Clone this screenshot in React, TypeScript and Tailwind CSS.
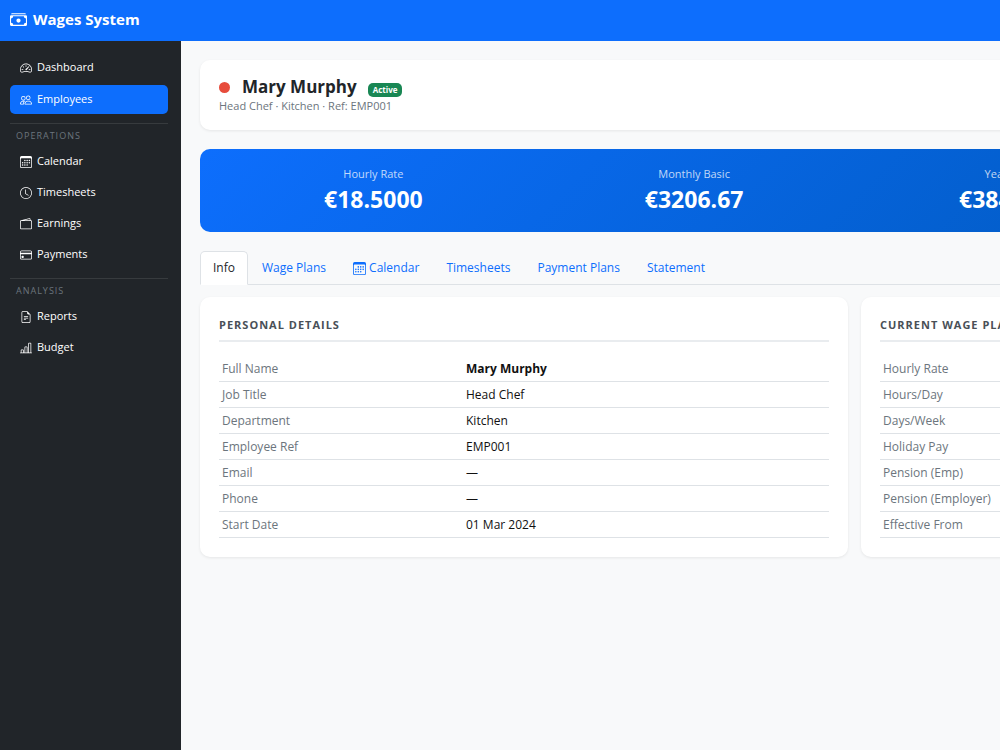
import { useState } from "react";
import type { IconType } from "react-icons";
import {
    BsBarChartLine,
    BsCalendar3,
    BsCashStack,
    BsClock,
    BsCreditCard,
    BsFileEarmarkText,
    BsPeople,
    BsSpeedometer2,
    BsWallet2,
} from "react-icons/bs";

interface NavItem {
    label: string;
    icon: IconType;
}

interface NavGroup {
    title?: string;
    items: NavItem[];
}

interface DetailRow {
    label: string;
    value: string;
    bold?: boolean;
}

const navGroups: NavGroup[] = [
    {
        items: [
            { label: "Dashboard", icon: BsSpeedometer2 },
            { label: "Employees", icon: BsPeople },
        ],
    },
    {
        title: "Operations",
        items: [
            { label: "Calendar", icon: BsCalendar3 },
            { label: "Timesheets", icon: BsClock },
            { label: "Earnings", icon: BsWallet2 },
            { label: "Payments", icon: BsCreditCard },
        ],
    },
    {
        title: "Analysis",
        items: [
            { label: "Reports", icon: BsFileEarmarkText },
            { label: "Budget", icon: BsBarChartLine },
        ],
    },
];

const stats = [
    { label: "Hourly Rate", value: "€18.5000" },
    { label: "Monthly Basic", value: "€3206.67" },
    { label: "Yearly Basic", value: "€38480.04" },
];

const tabs: { label: string; icon?: IconType }[] = [
    { label: "Info" },
    { label: "Wage Plans" },
    { label: "Calendar", icon: BsCalendar3 },
    { label: "Timesheets" },
    { label: "Payment Plans" },
    { label: "Statement" },
];

const personalDetails: DetailRow[] = [
    { label: "Full Name", value: "Mary Murphy", bold: true },
    { label: "Job Title", value: "Head Chef" },
    { label: "Department", value: "Kitchen" },
    { label: "Employee Ref", value: "EMP001" },
    { label: "Email", value: "—" },
    { label: "Phone", value: "—" },
    { label: "Start Date", value: "01 Mar 2024" },
];

const wagePlan: DetailRow[] = [
    { label: "Hourly Rate", value: "€18.5000" },
    { label: "Hours/Day", value: "—" },
    { label: "Days/Week", value: "—" },
    { label: "Holiday Pay", value: "—" },
    { label: "Pension (Emp)", value: "—" },
    { label: "Pension (Employer)", value: "—" },
    { label: "Effective From", value: "01 Mar 2024" },
];

const Sidebar = () => {
    const [current, setCurrent] = useState("Employees");

    return (
        <nav className="w-[181px] shrink-0 bg-[#212529] px-[10px] py-[11px]">
            {navGroups.map((group, index) => (
                <div key={group.title ?? index}>
                    {group.title && (
                        <h2
                            className="mt-2 mr-[3px] border-t border-[#373b3e] pt-1 pb-[2px] pl-[6px]
                                text-[9px] leading-4 tracking-[1px] uppercase text-[#6c757d]"
                        >
                            {group.title}
                        </h2>
                    )}
                    <ul className={group.title ? "" : "space-y-px"}>
                        {group.items.map(({ label, icon: Icon }) => (
                            <li key={label} className="mr-[3px] py-px">
                                <a
                                    href="#"
                                    onClick={() => setCurrent(label)}
                                    className={`flex h-[29px] items-center gap-[5px] rounded-[5px] px-[10px]
                                        text-[11px] font-medium text-white ${
                                            current === label
                                                ? "bg-[#0d6efd]"
                                                : ""
                                        }`}
                                >
                                    <Icon className="size-3" />
                                    {label}
                                </a>
                            </li>
                        ))}
                    </ul>
                </div>
            ))}
        </nav>
    );
};

const DetailCard = ({ title, rows }: { title: string; rows: DetailRow[] }) => (
    <section className="rounded-[10px] bg-white p-[19px] shadow-[0_1px_3px_rgba(0,0,0,0.08)]">
        <h2
            className="mb-[14px] border-b-2 border-[#e9ecef] pb-[6px] text-[11px] leading-[18px] font-bold
                tracking-[1px] uppercase text-[#495057]"
        >
            {title}
        </h2>
        <table className="w-full table-fixed text-[12px] leading-[19px]">
            <tbody>
                {rows.map((row) => (
                    <tr key={row.label} className="border-b border-[#dee2e6]">
                        <th
                            scope="row"
                            className="w-2/5 px-[3px] py-[3px] text-left font-normal text-[#6c757d]"
                        >
                            {row.label}
                        </th>
                        <td
                            className={`px-[3px] py-[3px] text-[#111] ${
                                row.bold ? "font-bold" : ""
                            }`}
                        >
                            {row.value}
                        </td>
                    </tr>
                ))}
            </tbody>
        </table>
    </section>
);

const App = () => {
    const [activeTab, setActiveTab] = useState("Info");

    return (
        <div className="flex min-h-screen flex-col overflow-hidden bg-[#f8f9fa] font-['Segoe_UI','Open_Sans','Noto_Sans',sans-serif] text-[#212529]">
            <header className="flex h-[41px] items-center gap-[6px] bg-[#0d6efd] px-[10px] pb-[2px] text-white">
                <BsCashStack className="size-[17px]" />
                <span className="text-[15px] font-bold">Wages System</span>
            </header>

            <div className="flex grow">
                <Sidebar />

                {/* The record is laid out for a wide desktop */}
                <main className="min-w-[1347px] grow p-[19px]">
                    <section className="rounded-[10px] bg-white px-[19px] pt-4 pb-4 shadow-[0_1px_3px_rgba(0,0,0,0.08)]">
                        <div className="flex items-center">
                            <span className="mr-3 size-[11px] rounded-full bg-[#e74c3c]" />
                            <h1 className="text-[17px] leading-[22px] font-bold">
                                Mary Murphy
                            </h1>
                            <span
                                className="mt-[6px] ml-[11px] rounded-[5px] bg-[#198754] px-[5px] text-[8px]
                                    leading-[14px] font-bold text-white"
                            >
                                Active
                            </span>
                        </div>
                        <p className="text-[11px] leading-4 text-[#6c757d]">
                            Head Chef · Kitchen · Ref: EMP001
                        </p>
                    </section>

                    <dl
                        className="mt-[19px] grid grid-cols-4 gap-3 rounded-[10px] bg-linear-135 from-[#0d6efd]
                            to-[#0056b3] px-[19px] py-4 text-center text-white"
                    >
                        {stats.map((stat) => (
                            <div key={stat.label}>
                                <dt className="text-[11px] leading-[18px] text-white/75">
                                    {stat.label}
                                </dt>
                                <dd className="text-[23px] leading-[33px] font-bold">
                                    {stat.value}
                                </dd>
                            </div>
                        ))}
                    </dl>

                    <div
                        role="tablist"
                        className="mt-[19px] flex gap-px border-b border-[#dee2e6]"
                    >
                        {tabs.map(({ label, icon: Icon }) => (
                            <button
                                key={label}
                                role="tab"
                                aria-selected={activeTab === label}
                                onClick={() => setActiveTab(label)}
                                className={`-mb-px flex h-[34px] items-center gap-[3px] rounded-t-[5px] border px-3
                                    text-[12px] ${
                                        activeTab === label
                                            ? "border-[#dee2e6] border-b-white bg-white text-[#212529]"
                                            : "border-transparent text-[#0d6efd]"
                                    }`}
                            >
                                {Icon && <Icon className="size-[13px]" />}
                                {label}
                            </button>
                        ))}
                    </div>

                    <div className="mt-3 grid grid-cols-2 gap-[13px]">
                        <DetailCard
                            title="Personal Details"
                            rows={personalDetails}
                        />
                        <DetailCard title="Current Wage Plan" rows={wagePlan} />
                    </div>
                </main>
            </div>
        </div>
    );
};

export default App;
